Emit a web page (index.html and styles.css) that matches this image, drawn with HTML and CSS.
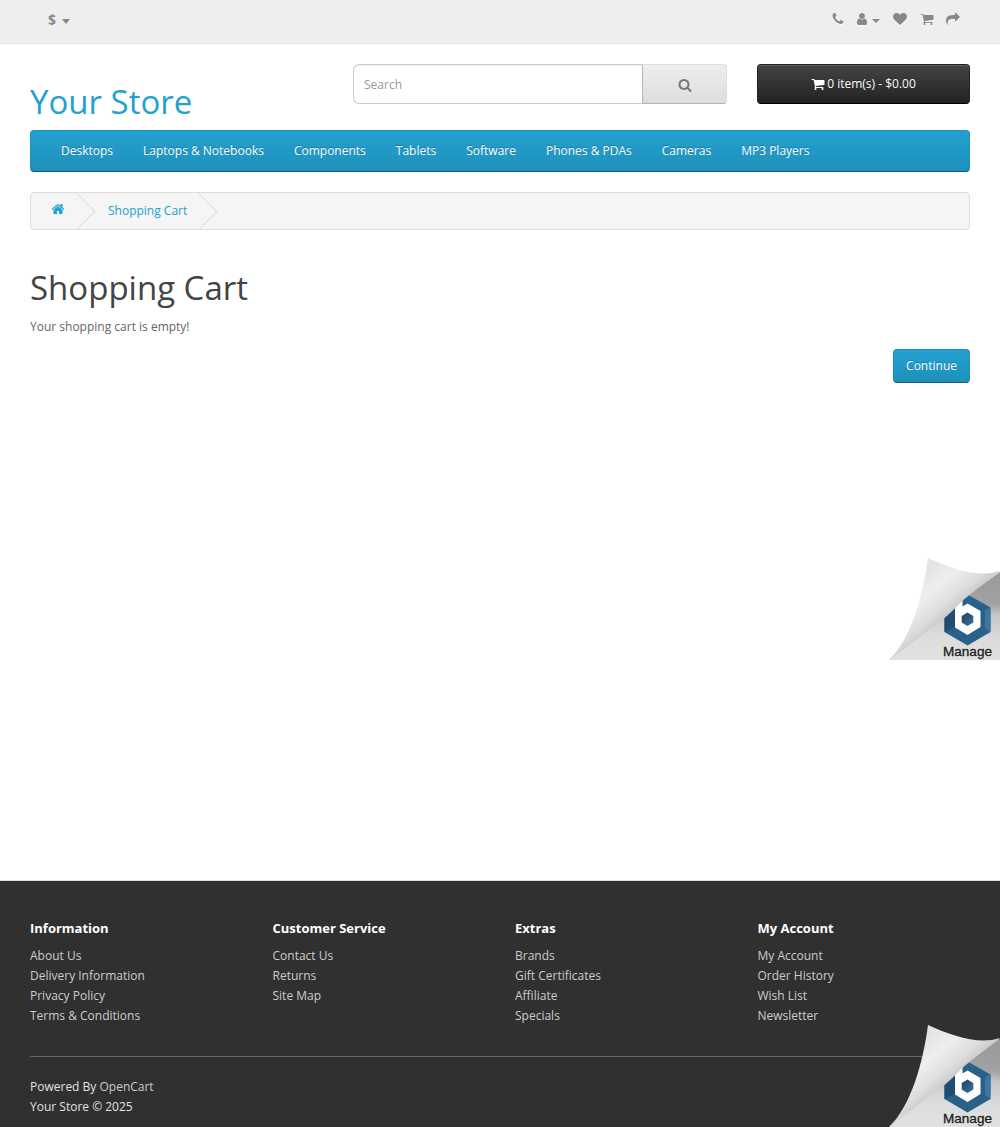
FILE: index.html
```html
<!DOCTYPE html>
<html lang="en">
<head>
<meta charset="utf-8">
<title>Shopping Cart</title>
<link rel="stylesheet" href="styles.css">
</head>
<body>
<svg class="defs" width="0" height="0" aria-hidden="true">
  <defs>
    <symbol id="i-phone" viewBox="0 0 1792 1792"><path d="M1600 1240q0 27-10 70.5t-21 68.5q-21 50-122 106-94 51-186 51-27 0-53-3.5t-57.5-12.5-47-14.5-55.5-20.5-49-18q-98-35-175-83-127-79-264-216t-216-264q-48-77-83-175-3-9-18-49t-20.5-55.5-14.5-47-12.5-57.5-3.5-53q0-92 51-186 56-101 106-122 25-11 68.5-21t70.5-10q14 0 21 3 18 6 53 76 11 19 30 54t35 63.5 31 53.5q3 4 17.5 25t21.5 35.5 7 28.5q0 20-28.5 50t-62 55-62 53-28.5 46q0 9 5 22.5t8.5 20.5 14 24 11.5 19q76 137 174 235t235 174q2 1 19 11.5t24 14 20.5 8.5 22.5 5q18 0 46-28.5t53-62 55-62 50-28.5q14 0 28.5 7t35.5 21.5 25 17.5q25 15 53.5 31t63.5 35 54 30q70 35 76 53 3 7 3 21z"/></symbol>
    <symbol id="i-user" viewBox="0 0 1792 1792"><path d="M1536 1399q0 109-62.5 187t-150.5 78h-854q-88 0-150.5-78t-62.5-187q0-85 8.5-160.5t31.5-152 58.5-131 94-89 134.5-34.5q131 128 313 128t313-128q76 0 134.5 34.5t94 89 58.5 131 31.5 152 8.5 160.5zm-256-887q0 159-112.5 271.5t-271.5 112.5-271.5-112.5-112.5-271.5 112.5-271.5 271.5-112.5 271.5 112.5 112.5 271.5z"/></symbol>
    <symbol id="i-heart" viewBox="0 0 1792 1792"><path d="M896 1664q-26 0-44-18l-624-602q-10-8-27.5-26t-55.5-65.5-68-97.5-53.5-121-23.5-138q0-220 127-344t351-124q62 0 126.5 21.5t120 58 95.5 68.5 76 68q36-36 76-68t95.5-68.5 120-58 126.5-21.5q224 0 351 124t127 344q0 221-229 450l-623 600q-18 18-44 18z"/></symbol>
    <symbol id="i-cart" viewBox="0 0 1792 1792"><path d="M704 1536q0 52-38 90t-90 38-90-38-38-90 38-90 90-38 90 38 38 90zm896 0q0 52-38 90t-90 38-90-38-38-90 38-90 90-38 90 38 38 90zm128-1088v512q0 24-16.5 42.5t-40.5 21.5l-1044 122q13 60 13 70 0 16-24 64h920q26 0 45 19t19 45-19 45-45 19h-1024q-26 0-45-19t-19-45q0-11 8-31.5t16-36 21.5-40 15.5-29.5l-177-823h-204q-26 0-45-19t-19-45 19-45 45-19h256q16 0 28.5 6.5t19.5 15.5 13 24.5 8 26 5.5 29.5 4.5 26h1201q26 0 45 19t19 45z"/></symbol>
    <symbol id="i-share" viewBox="0 0 1792 1792"><path d="M1792 640q0 26-19 45l-512 512q-19 19-45 19t-45-19-19-45v-256h-224q-98 0-175.5 6t-154 21.5-133 42.5-105.5 69.5-80 101-48.5 138.5-17.5 181q0 55 5 123 0 6 2.5 23.5t2.5 26.5q0 15-8.5 25t-23.5 10q-16 0-28-17-7-9-13-22t-13.5-30-10.5-24q-127-285-127-451 0-199 53-333 162-403 875-403h224v-256q0-26 19-45t45-19 45 19l512 512q19 19 19 45z"/></symbol>
    <symbol id="i-search" viewBox="0 0 1792 1792"><path d="M1216 832q0-185-131.5-316.5t-316.5-131.5-316.5 131.5-131.5 316.5 131.5 316.5 316.5 131.5 316.5-131.5 131.5-316.5zm512 832q0 52-38 90t-90 38q-54 0-90-38l-343-342q-179 124-399 124-143 0-273.5-55.5t-225-150-150-225-55.5-273.5 55.5-273.5 150-225 225-150 273.5-55.5 273.5 55.5 225 150 150 225 55.5 273.5q0 220-124 399l343 343q37 37 37 90z"/></symbol>
    <symbol id="i-home" viewBox="0 0 1792 1792"><path d="M1472 992v480q0 26-19 45t-45 19h-384v-384h-256v384h-384q-26 0-45-19t-19-45v-480q0-1 .5-3t.5-3l575-474 575 474q1 2 1 6zm223-69l-62 74q-8 9-21 11h-3q-13 0-21-7l-692-577-692 577q-12 8-24 7-13-2-21-11l-62-74q-8-10-7-23.5t11-21.5l719-599q32-26 76-26t76 26l244 204v-195q0-14 9-23t23-9h192q14 0 23 9t9 23v408l219 182q10 8 11 21.5t-7 23.5z"/></symbol>
    <linearGradient id="g-curl" gradientUnits="userSpaceOnUse" x1="32" y1="18" x2="70" y2="62">
      <stop offset="0" stop-color="#e4e4e4"/><stop offset=".35" stop-color="#eeeeee"/><stop offset=".65" stop-color="#dedede"/><stop offset=".92" stop-color="#c4c4c4"/><stop offset="1" stop-color="#cecece"/>
    </linearGradient>
    <linearGradient id="g-under" gradientUnits="userSpaceOnUse" x1="100" y1="20" x2="92" y2="102">
      <stop offset="0" stop-color="#9a9a9a"/><stop offset=".32" stop-color="#a2a2a2"/><stop offset=".45" stop-color="#c6c6c6"/><stop offset=".75" stop-color="#dcdcdc"/><stop offset="1" stop-color="#e0e0e0"/>
    </linearGradient>
    <linearGradient id="g-hex" x1="0" y1="0" x2="1" y2="1">
      <stop offset="0" stop-color="#1d4262"/><stop offset="1" stop-color="#3a72a0"/>
    </linearGradient>
    <symbol id="page-curl" viewBox="0 0 112 103">
      <path fill="url(#g-under)" d="M112 15V103H1L40 65Z"/>
      <path fill="#2b6189" d="M79.500 37.500L102.500 50.500V75L79.500 88.500L56.500 75V50.500Z"/>
      <path fill="#204d70" d="M56.500 50.500L67 45V70L56.500 75Z"/>
      <path fill="#3d769f" d="M102.500 50.500V75L97 71V53.500Z"/>
      <path fill="#fff" d="M67 38L74.500 38V49.500L79.500 46.500L92.500 54V70L79.500 78L67 70.500Z"/>
      <path fill="url(#g-hex)" d="M79.500 55.500L85.300 59V65.500L79.500 69L73.700 65.500V59Z"/>
      <path fill="url(#g-curl)" d="M40 1C64 12 91 21 112 14L110 16.500C98 25 86 34 76 42.500C68 50 62 57 54 63C39 74 27 84 1 103C23 82 35 39 40 1Z"/>
      <text x="55" y="99" textLength="49" lengthAdjust="spacingAndGlyphs">Manage</text>
    </symbol>
  </defs>
</svg>

<nav class="topbar">
  <a class="currency"><strong>$</strong><span class="caret"></span></a>
  <div class="toplinks">
    <svg class="icon phone"><use href="#i-phone"/></svg>
    <span class="account"><svg class="icon"><use href="#i-user"/></svg><span class="caret"></span></span>
    <svg class="icon heart"><use href="#i-heart"/></svg>
    <svg class="icon cart-link"><use href="#i-cart"/></svg>
    <svg class="icon"><use href="#i-share"/></svg>
  </div>
</nav>

<header class="header">
  <div class="logo">Your Store</div>
  <div class="search">
    <input type="text" placeholder="Search">
    <button type="button"><svg class="icon"><use href="#i-search"/></svg></button>
  </div>
  <button type="button" class="cart"><svg class="icon"><use href="#i-cart"/></svg><span>0 item(s) - $0.00</span></button>
</header>

<nav class="menu">
  <a>Desktops</a><a>Laptops &amp; Notebooks</a><a>Components</a><a>Tablets</a><a>Software</a><a>Phones &amp; PDAs</a><a>Cameras</a><a>MP3 Players</a>
</nav>

<main class="content">
  <div class="breadcrumb">
    <a class="crumb home"><svg class="icon"><use href="#i-home"/></svg></a>
    <a class="crumb">Shopping Cart</a>
  </div>
  <h1>Shopping Cart</h1>
  <p>Your shopping cart is empty!</p>
  <div class="buttons"><a class="continue">Continue</a></div>
</main>

<footer class="footer">
  <div class="columns">
    <section><h5>Information</h5><a>About Us</a><a>Delivery Information</a><a>Privacy Policy</a><a>Terms &amp; Conditions</a></section>
    <section><h5>Customer Service</h5><a>Contact Us</a><a>Returns</a><a>Site Map</a></section>
    <section><h5>Extras</h5><a>Brands</a><a>Gift Certificates</a><a>Affiliate</a><a>Specials</a></section>
    <section><h5>My Account</h5><a>My Account</a><a>Order History</a><a>Wish List</a><a>Newsletter</a></section>
  </div>
  <p class="legal">Powered By <a>OpenCart</a><br>Your Store © 2025</p>
</footer>

<svg class="curl curl-middle"><use href="#page-curl"/></svg>
<svg class="curl curl-bottom"><use href="#page-curl"/></svg>
</body>
</html>
```
FILE: styles.css
```css
* { box-sizing: border-box; }
body {
  margin: 0;
  position: relative;
  height: 1127px;
  overflow: hidden;
  display: flex;
  flex-direction: column;
  background: #fff;
  color: #666;
  font: 400 12px/20px "Open Sans", sans-serif;
}
.defs { position: absolute; }
.icon { width: 14px; height: 14px; fill: currentColor; flex: none; display: block; }
.caret {
  border: 4px solid transparent;
  border-top-color: currentColor;
  border-bottom: 0;
}

.topbar {
  height: 44px;
  flex: none;
  padding: 0 40px 0 48px;
  display: flex;
  justify-content: space-between;
  background: #eee;
  border-bottom: 1px solid #e2e2e2;
  color: #888;
  text-shadow: 0 1px 0 #fff;
}
.currency { display: flex; align-items: center; gap: 6px; height: 40px; font-size: 14px; }
.currency .caret { border-width: 5px 4.5px 0; margin-top: 2px; }
.toplinks { display: flex; align-items: center; height: 38px; }
.toplinks .icon { filter: drop-shadow(0 1px 0 #fff); }
.phone { margin-right: 10px; }
.account { display: flex; align-items: center; gap: 3px; margin-right: 13px; }
.account .caret { margin-top: 4px; }
.heart { margin-right: 13px; }
.cart-link { margin-right: 12px; }

.header {
  height: 86px;
  flex: none;
  padding: 20px 30px 0;
  display: grid;
  grid-template-columns: 293px 374px 213px;
  column-gap: 30px;
}
.logo { padding-top: 19px; font-size: 33px; line-height: 38px; color: #23a1d1; }
.search { display: flex; height: 40px; }
.search input {
  flex: 1;
  min-width: 0;
  padding: 2px 10px 0;
  border: 1px solid #ccc;
  border-right: 0;
  border-radius: 6px 0 0 6px;
  box-shadow: inset 0 1px 1px rgba(0, 0, 0, .075);
  font: inherit;
}
.search input::placeholder { color: #999; opacity: 1; }
.search button {
  width: 85px;
  padding: 2px 0 0;
  display: grid;
  place-items: center;
  border: 1px solid;
  border-color: #ddd #ddd #b3b3b3 #b7b7b7;
  border-radius: 0 4px 4px 0;
  background: linear-gradient(#eee, #ddd);
  color: #777;
}
.cart {
  height: 40px;
  padding: 0 0 1px;
  display: flex;
  justify-content: center;
  align-items: center;
  gap: 2px;
  border: 1px solid;
  border-color: #222 #222 #000;
  border-radius: 4px;
  background: linear-gradient(#444, #222);
  box-shadow: inset 0 1px 0 rgba(255, 255, 255, .15);
  color: #fff;
  font: inherit;
  text-shadow: 0 -1px 0 rgba(0, 0, 0, .25);
}

.menu {
  height: 42px;
  flex: none;
  margin: 0 30px 20px;
  padding: 10px 15px;
  display: flex;
  border: 1px solid;
  border-color: #1f90bb #1f90bb #145e7a;
  border-radius: 4px;
  background: linear-gradient(#23a1d1, #1f90bb);
  color: #fff;
  text-shadow: 0 -1px 0 rgba(0, 0, 0, .25);
}
.menu a { padding: 0 15px; }

.content { flex: none; height: 688px; padding: 0 30px; }
.breadcrumb {
  height: 38px;
  margin-bottom: 40px;
  display: flex;
  overflow: hidden;
  background: #f5f5f5;
  border: 1px solid #ddd;
  border-radius: 4px;
  color: #23a1d1;
}
.crumb { position: relative; padding: 8px 17px 0 26px; }
.crumb.home { padding: 9px 17px 0 20px; }
.crumb::after {
  content: "";
  position: absolute;
  top: 5px;
  right: -8px;
  width: 26px;
  height: 26px;
  border: 1px solid #ddd;
  border-width: 1px 1px 0 0;
  transform: rotate(45deg);
}
h1 { margin: 0; font-size: 33px; font-weight: 400; line-height: 36px; color: #444; }
.content p { margin: 11px 0 12px; }
.buttons { display: flex; justify-content: flex-end; }
.continue {
  height: 34px;
  padding: 6px 12px;
  border: 1px solid;
  border-color: #1f90bb #1f90bb #145e7a;
  border-radius: 4px;
  background: linear-gradient(#23a1d1, #1f90bb);
  color: #fff;
  text-shadow: 0 -1px 0 rgba(0, 0, 0, .25);
}

.footer {
  flex: 1;
  padding: 37px 30px 0;
  background: #303030;
  border-top: 1px solid #ddd;
  color: #e2e2e2;
}
.columns {
  height: 139px;
  display: grid;
  grid-template-columns: repeat(4, 242.5px);
  border-bottom: 1px solid #666;
}
.columns a { display: block; }
.footer a { color: #ccc; }
h5 { margin: 0 0 8px; font-size: 13px; line-height: 20px; font-weight: 700; color: #fff; }
.legal { margin: 20px 0 0; }

.curl {
  position: absolute;
  right: 0;
  width: 112px;
  height: 103px;
  font: 13px "Liberation Sans", sans-serif;
  fill: #1c1c1c;
  stroke-width: .3px;
}
.curl-middle { top: 557px; }
.curl-bottom { top: 1024px; }
#page-curl text { stroke: #1c1c1c; }
```
